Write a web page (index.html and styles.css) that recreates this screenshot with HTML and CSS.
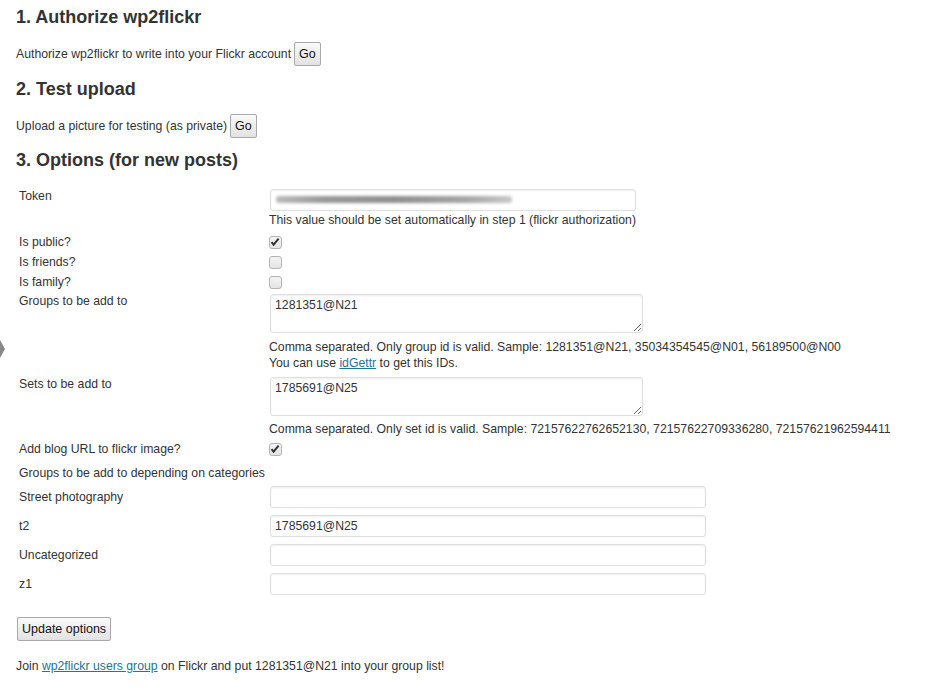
FILE: index.html
```html
<!DOCTYPE html>
<html>
<head>
<meta charset="utf-8">
<title>wp2flickr</title>
<link rel="stylesheet" href="styles.css">
</head>
<body>
<div class="edge-arrow"></div>
<div class="wrap">
  <h3 class="sect first">1. Authorize wp2flickr</h3>
  <p class="line">Authorize wp2flickr to write into your Flickr account <button class="btn">Go</button></p>
  <h3 class="sect">2. Test upload</h3>
  <p class="line">Upload a picture for testing (as private) <button class="btn">Go</button></p>
  <h3 class="sect">3. Options (for new posts)</h3>

  <div class="opts">
    <div class="row r-token">
      <div class="lbl">Token</div>
      <div class="fld">
        <div class="fake-input token"><span class="blur"></span></div>
        <div class="desc">This value should be set automatically in step 1 (flickr authorization)</div>
      </div>
    </div>
    <div class="row r-check">
      <div class="lbl">Is public?</div>
      <div class="fld"><span class="cb"><svg viewBox="0 0 12 12" width="12" height="12"><path d="M2.5 6.2 L4.6 8.6 L9.6 2.6" fill="none" stroke="#333" stroke-width="2"/></svg></span></div>
    </div>
    <div class="row r-check">
      <div class="lbl">Is friends?</div>
      <div class="fld"><span class="cb"></span></div>
    </div>
    <div class="row r-check">
      <div class="lbl">Is family?</div>
      <div class="fld"><span class="cb"></span></div>
    </div>
    <div class="row r-area">
      <div class="lbl">Groups to be add to</div>
      <div class="fld">
        <textarea class="ta">1281351@N21</textarea>
        <div class="desc">Comma separated. Only group id is valid. Sample: 1281351@N21, 35034354545@N01, 56189500@N00<br>You can use <a href="#">idGettr</a> to get this IDs.</div>
      </div>
    </div>
    <div class="row r-area r-sets">
      <div class="lbl">Sets to be add to</div>
      <div class="fld">
        <textarea class="ta">1785691@N25</textarea>
        <div class="desc">Comma separated. Only set id is valid. Sample: 72157622762652130, 72157622709336280, 72157621962594411</div>
      </div>
    </div>
    <div class="row r-check r-blog">
      <div class="lbl">Add blog URL to flickr image?</div>
      <div class="fld"><span class="cb"><svg viewBox="0 0 12 12" width="12" height="12"><path d="M2.5 6.2 L4.6 8.6 L9.6 2.6" fill="none" stroke="#333" stroke-width="2"/></svg></span></div>
    </div>
    <div class="row r-full">
      <div class="lbl">Groups to be add to depending on categories</div>
    </div>
    <div class="row r-cat">
      <div class="lbl">Street photography</div>
      <div class="fld"><input class="txt" type="text" value=""></div>
    </div>
    <div class="row r-cat">
      <div class="lbl">t2</div>
      <div class="fld"><input class="txt" type="text" value="1785691@N25"></div>
    </div>
    <div class="row r-cat">
      <div class="lbl">Uncategorized</div>
      <div class="fld"><input class="txt" type="text" value=""></div>
    </div>
    <div class="row r-cat">
      <div class="lbl">z1</div>
      <div class="fld"><input class="txt" type="text" value=""></div>
    </div>
  </div>

  <div class="submit"><button class="btn big">Update options</button></div>
  <p class="join">Join <a href="#">wp2flickr users group</a> on Flickr and put 1281351@N21 into your group list!</p>
</div>
</body>
</html>
```

FILE: styles.css
```css
html, body {
  margin: 0;
  padding: 0;
  background: #fff;
}
body {
  font-family: "Liberation Sans", Arial, sans-serif;
  font-size: 12.25px;
  color: #333;
  position: relative;
}
.edge-arrow {
  position: absolute;
  left: 0;
  top: 340px;
  width: 0;
  height: 0;
  border-top: 9px solid transparent;
  border-bottom: 9px solid transparent;
  border-left: 5px solid #888;
}
.wrap {
  padding: 0 16px;
}
.sect {
  font-size: 18px;
  font-weight: bold;
  margin: 0;
  line-height: 22px;
  color: #333;
}
.sect.first {
  padding-top: 6px;
}
.line {
  margin: 0;
  display: flex;
  align-items: center;
  gap: 3px;
  line-height: 16px;
}
.wrap > .line:nth-of-type(1) {
  padding: 14px 0 12px;
}
.wrap > .line:nth-of-type(2) {
  padding: 14px 0 11px;
}
.btn {
  font-family: "Liberation Sans", Arial, sans-serif;
  font-size: 12.5px;
  color: #111;
  height: 24px;
  padding: 0 4px;
  border: 1px solid #a9a9a9;
  border-radius: 2px;
  background: linear-gradient(#fafafa, #e2e2e2);
  line-height: 20px;
}
.opts {
  padding: 15px 0 0 3px;
}
.row {
  display: grid;
  grid-template-columns: 250px 1fr;
  padding: 3px 0;
}
.r-token {
  padding-bottom: 4px;
}
.lbl {
  line-height: 14px;
}
.fld {
  display: flex;
  flex-direction: column;
  align-items: flex-start;
}
.fake-input {
  box-sizing: border-box;
  width: 366px;
  height: 22px;
  border: 1px solid #dfdfdf;
  border-radius: 3px;
  box-shadow: inset 0 1px 2px rgba(0,0,0,0.07);
  position: relative;
  margin-left: 1px;
  overflow: hidden;
}
.blur {
  position: absolute;
  left: 5px;
  top: 6px;
  width: 236px;
  height: 7px;
  background: linear-gradient(90deg, #bbb, #999 20%, #8f8f8f 50%, #a5a5a5 80%, #c8c8c8);
  filter: blur(1.8px);
  border-radius: 3px;
}
.desc {
  line-height: 16px;
  margin-top: 1px;
}
.cb {
  box-sizing: border-box;
  display: block;
  width: 13px;
  height: 13px;
  border: 1px solid #b4b4b4;
  border-radius: 3px;
  background: linear-gradient(#f4f4f4, #e4e4e4);
  margin-top: 1px;
  position: relative;
}
.cb svg {
  position: absolute;
  left: -1px;
  top: -1px;
}
.r-area {
  padding-top: 2px;
}
.ta {
  box-sizing: border-box;
  width: 373px;
  height: 39px;
  margin: 0 0 0 1px;
  padding: 3px 4px;
  border: 1px solid #dfdfdf;
  border-radius: 3px;
  box-shadow: inset 0 1px 2px rgba(0,0,0,0.07);
  font-family: "Liberation Sans", Arial, sans-serif;
  font-size: 12.25px;
  color: #333;
  line-height: 15px;
}
.r-area .desc {
  margin-top: 6px;
}
.r-sets {
  padding-top: 3px;
}
.r-sets .desc {
  margin-top: 5px;
}
.r-blog {
  padding-top: 2px;
}
.r-full {
  padding: 7px 0 2px;
}
.r-full .lbl {
  grid-column: 1 / 3;
}
.r-cat {
  padding: 4px 0 3px;
  align-items: center;
}
.txt {
  box-sizing: border-box;
  width: 436px;
  height: 22px;
  margin: 0 0 0 1px;
  padding: 0 4px;
  border: 1px solid #dfdfdf;
  border-radius: 3px;
  box-shadow: inset 0 1px 2px rgba(0,0,0,0.07);
  font-family: "Liberation Sans", Arial, sans-serif;
  font-size: 12.25px;
  color: #333;
}
.submit {
  padding: 19px 0 0 1px;
}
.join {
  margin: 0;
  padding-top: 17px;
  line-height: 16px;
}
a {
  color: #21759b;
  text-decoration: underline;
}
```
